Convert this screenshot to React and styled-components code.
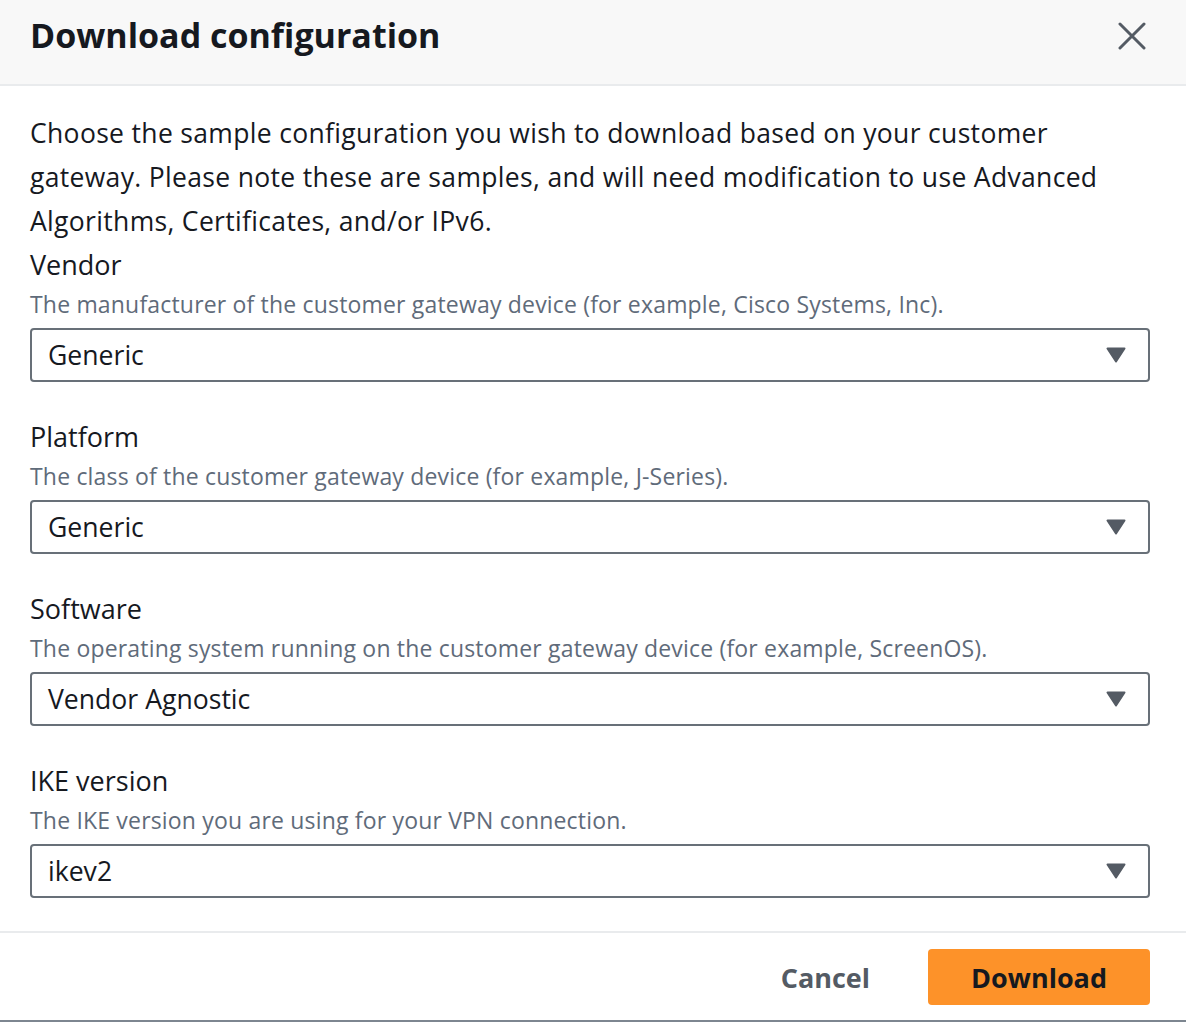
import React from 'react';
import styled, { createGlobalStyle } from 'styled-components';

const GlobalStyle = createGlobalStyle`
  html, body {
    margin: 0;
    padding: 0;
    background: #ffffff;
  }
  body {
    font-family: "Open Sans", "Liberation Sans", sans-serif;
    color: #16191f;
  }
`

const fields = [
  {
    label: 'Vendor',
    hint: 'The manufacturer of the customer gateway device (for example, Cisco Systems, Inc).',
    value: 'Generic',
  },
  {
    label: 'Platform',
    hint: 'The class of the customer gateway device (for example, J-Series).',
    value: 'Generic',
  },
  {
    label: 'Software',
    hint: 'The operating system running on the customer gateway device (for example, ScreenOS).',
    value: 'Vendor Agnostic',
  },
  {
    label: 'IKE version',
    hint: 'The IKE version you are using for your VPN connection.',
    value: 'ikev2',
  },
]

const Modal = styled.div`
  width: 1186px;
  height: 1022px;
  box-sizing: border-box;
  display: flex;
  flex-direction: column;
  background: #fff;
  border-bottom: 2px solid #7d8690;
`

const Header = styled.div`
  height: 86px;
  box-sizing: border-box;
  display: flex;
  justify-content: space-between;
  align-items: flex-start;
  padding: 11px 40px 0 30px;
  background: #f8f8f8;
  border-bottom: 2px solid #e9ebed;
`

const Title = styled.h1`
  margin: 0;
  font-size: 34px;
  line-height: 48px;
  font-weight: 700;
  color: #16191f;
`

const CloseButton = styled.button`
  border: 0;
  background: none;
  padding: 0;
  margin-top: 11px;
  width: 28px;
  height: 28px;
  display: flex;
  align-items: center;
  justify-content: center;
  cursor: pointer;
`

const Body = styled.div`
  padding: 25px 36px 33px 30px;
  display: flex;
  flex-direction: column;
`

const Intro = styled.p`
  margin: 0;
  font-size: 26.5px;
  letter-spacing: 0.33px;
  line-height: 44px;
  color: #16191f;
`

const Field = styled.div`
  display: flex;
  flex-direction: column;
  margin-bottom: ${p => (p.last ? '0' : '33px')};
`

const Label = styled.div`
  font-size: 27px;
  line-height: 44px;
  color: #16191f;
`

const Hint = styled.div`
  font-size: 23px;
  letter-spacing: 0.18px;
  line-height: 34px;
  color: #5f6b7a;
  margin-bottom: 7px;
`

const Select = styled.div`
  height: 54px;
  box-sizing: border-box;
  border: 2px solid #687078;
  border-radius: 4px;
  display: flex;
  align-items: center;
  justify-content: space-between;
  padding: 0 22px 0 16px;
  font-size: 26.6px;
  color: #16191f;
`

const Footer = styled.div`
  border-top: 2px solid #e9ebed;
  display: flex;
  justify-content: flex-end;
  align-items: center;
  gap: 15px;
  padding: 16px 36px 0 30px;
`

const Button = styled.button`
  height: 56px;
  box-sizing: border-box;
  padding: 0 43px;
  border: 0;
  border-radius: 4px;
  font-family: inherit;
  font-size: 27px;
  font-weight: 700;
  cursor: pointer;
  background: ${p => (p.primary ? '#fd9229' : 'transparent')};
  color: ${p => (p.primary ? '#16191f' : '#545b64')};
`

const Caret = () => (
  <svg width="20" height="16" viewBox="0 0 20 16">
    <path d="M1.5 1.5 H18.5 L10 14.5 Z" fill="#545b64" stroke="#545b64" strokeWidth="2" strokeLinejoin="round" />
  </svg>
)

const CloseIcon = () => (
  <svg width="28" height="28" viewBox="0 0 28 28">
    <path d="M2 2 L26 26 M26 2 L2 26" stroke="#545b64" strokeWidth="3" strokeLinecap="round" />
  </svg>
)

export default function App () {
  return (
    <>
      <GlobalStyle />
      <Modal>
        <Header>
          <Title>Download configuration</Title>
          <CloseButton aria-label="Close"><CloseIcon /></CloseButton>
        </Header>
        <Body>
          <Intro>
            Choose the sample configuration you wish to download based on your customer gateway. Please note these are samples, and will need modification to use Advanced Algorithms, Certificates, and/or IPv6.
          </Intro>
          {fields.map((f, i) => (
            <Field key={f.label} last={i === fields.length - 1}>
              <Label>{f.label}</Label>
              <Hint>{f.hint}</Hint>
              <Select>
                <span>{f.value}</span>
                <Caret />
              </Select>
            </Field>
          ))}
        </Body>
        <Footer>
          <Button>Cancel</Button>
          <Button primary>Download</Button>
        </Footer>
      </Modal>
    </>
  );
}
